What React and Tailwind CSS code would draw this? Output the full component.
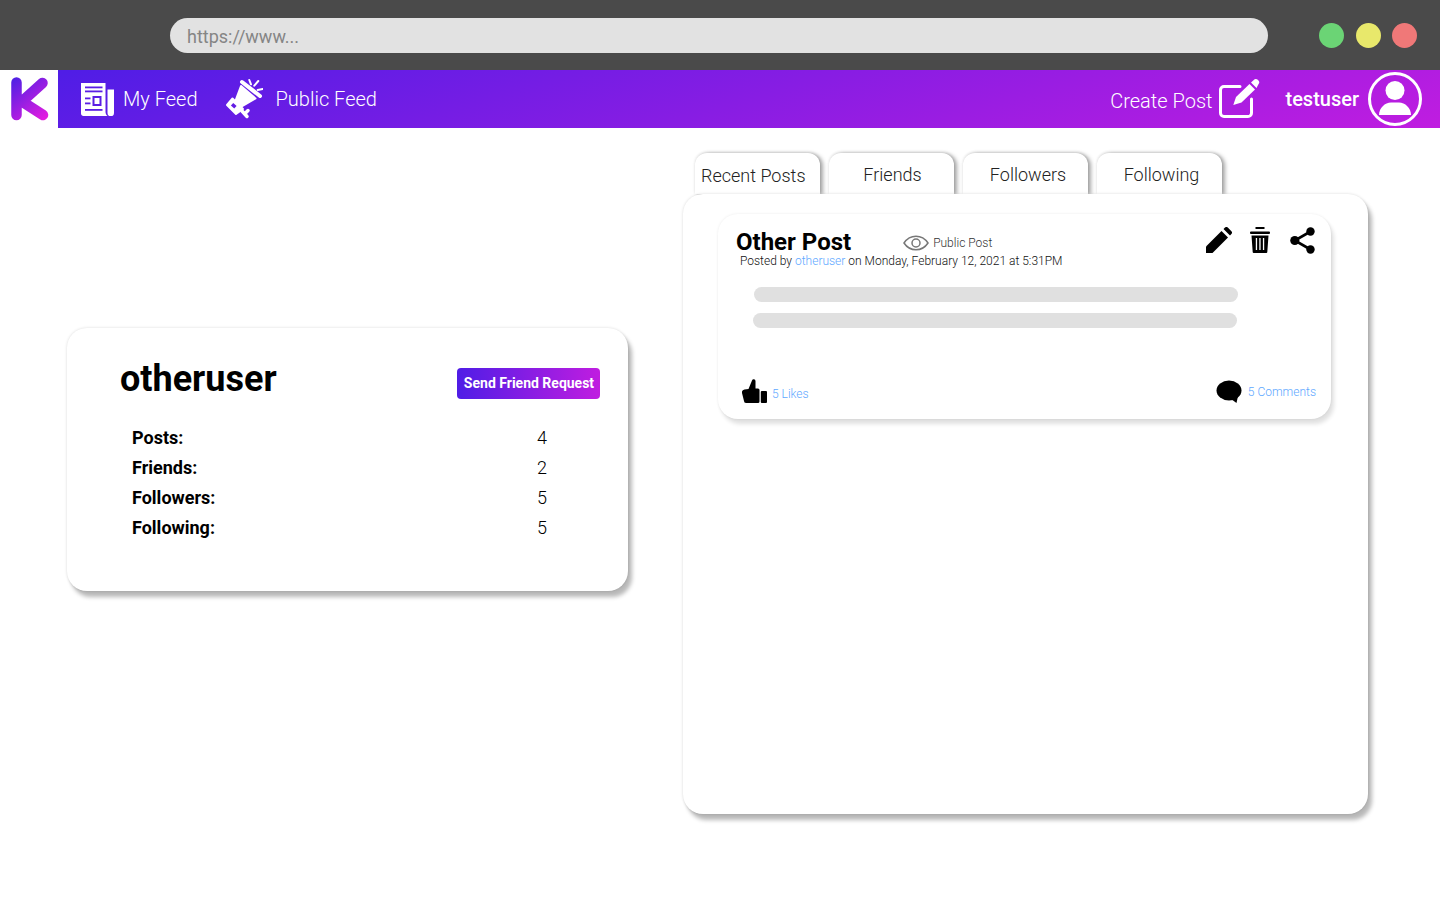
import React from 'react';

const KLogo = () => (
  <svg width="38" height="44" viewBox="0 0 38 44" fill="none" stroke="url(#klogo)" strokeWidth="10.500" strokeLinecap="round" strokeLinejoin="round">
    <defs>
      <linearGradient id="klogo" gradientUnits="userSpaceOnUse" x1="2" y1="2" x2="36" y2="42">
        <stop offset="0" stopColor="#4f20e4" />
        <stop offset="1" stopColor="#e81de0" />
      </linearGradient>
    </defs>
    <path d="M5.500 5.500V38M31.500 6L11 24.500L32 38" />
  </svg>
);

const NewspaperIcon = () => (
  <svg width="34" height="34" viewBox="0 0 34 34" fill="none">
    <path d="M0 1H24.500V30C24.500 31.500 25.300 33 26.500 34H2.500C1 34 0 33 0 31.500Z" fill="#fff" />
    <path d="M26.500 7.500H33V31A3.200 3.200 0 0 1 26.500 31Z" fill="#fff" />
    <g fill="#5a1de4">
      <rect x="4" y="4.500" width="17.500" height="1.800" />
      <rect x="4" y="8.500" width="17.500" height="1.800" />
      <rect x="4" y="15.500" width="5.500" height="1.800" />
      <rect x="4" y="20.500" width="5.500" height="1.800" />
      <rect x="4" y="27" width="17.500" height="1.800" />
      <path d="M11.500 14H20.500V24H11.500ZM13.500 16V22H18.500V16Z" fillRule="evenodd" />
    </g>
  </svg>
);

const MegaphoneIcon = () => (
  <svg width="38" height="42" viewBox="0 0 38 42" fill="none">
    <path d="M16 8L30.500 20.500L15 29.500L10 24Z" fill="#fff" stroke="#fff" strokeWidth="2" strokeLinejoin="round" />
    <path d="M7.500 20.500L18 31L11 36L2 27Z" fill="#fff" stroke="#fff" strokeWidth="2" strokeLinejoin="round" />
    <path d="M17 4L35 18" stroke="#fff" strokeWidth="4" strokeLinecap="round" />
    <rect x="6.500" y="26" width="4.500" height="3.500" transform="rotate(42 8.750 27.750)" fill="#621de4" />
    <path d="M17 33L22 38.500M20 35.500L23 32.500" stroke="#fff" strokeWidth="3.500" strokeLinecap="round" />
    <path d="M24.300 2L26 6.300M33.300 3L29.300 7.700M32.700 12L37.700 11" stroke="#fff" strokeWidth="2" strokeLinecap="round" />
  </svg>
);

const ComposeIcon = () => (
  <svg width="42" height="42" viewBox="0 0 42 42" fill="none">
    <path d="M21 8.500H5A3.500 3.500 0 0 0 1.500 12V35A3.500 3.500 0 0 0 5 38.500H29A3.500 3.500 0 0 0 32.500 35V21" stroke="#fff" strokeWidth="3" strokeLinecap="round" />
    <path d="M14.300 27L17 19L30.500 6L36 11.500L22.500 24.500Z" fill="#fff" />
    <path d="M32 4.500L34.500 2.200A3 3 0 0 1 39.300 6.500L37.500 10Z" fill="#fff" />
  </svg>
);

const UserIcon = () => (
  <svg width="54" height="54" viewBox="0 0 54 54" fill="none">
    <circle cx="27" cy="27" r="25.500" stroke="#fff" strokeWidth="3" />
    <circle cx="27" cy="18.500" r="9.500" fill="#fff" />
    <path d="M11 43C11 36 17 30.500 23 30.500H31C37 30.500 43 36 43 43Z" fill="#fff" />
  </svg>
);

const EyeIcon = () => (
  <svg width="26" height="16" viewBox="0 0 26 16" fill="none" stroke="#777" strokeWidth="1.500">
    <path d="M1 8C4 3.500 8 1.200 13 1.200S22 3.500 25 8C22 12.500 18 14.800 13 14.800S4 12.500 1 8Z" />
    <circle cx="13" cy="8" r="4" />
  </svg>
);

const PencilIcon = () => (
  <svg width="26" height="26" viewBox="0 0 26 26" fill="#000">
    <path d="M0 26V19.500L15.500 4L22 10.500L6.500 26Z" />
    <path d="M17.500 2L19 .6A2 2 0 0 1 21.800 .6L25.400 4.200A2 2 0 0 1 25.400 7L24 8.500Z" />
  </svg>
);

const TrashIcon = () => (
  <svg width="20" height="26" viewBox="0 0 20 26" fill="#000">
    <path d="M5.500 0H14.500V2H5.500Z" />
    <rect x="0" y="4.500" width="20" height="2.500" rx="1" />
    <path d="M1.500 8.500H18.500L17.300 25A1 1 0 0 1 16.300 26H3.700A1 1 0 0 1 2.700 25Z" />
    <g fill="#fff">
      <rect x="5.800" y="11" width="1.300" height="12" />
      <rect x="9.300" y="11" width="1.300" height="12" />
      <rect x="12.900" y="11" width="1.300" height="12" />
    </g>
  </svg>
);

const ShareIcon = () => (
  <svg width="26" height="27" viewBox="0 0 26 27" fill="#000">
    <circle cx="20.500" cy="4.500" r="4.200" />
    <circle cx="4.800" cy="13.500" r="4.600" />
    <circle cx="20.500" cy="22.500" r="4.200" />
    <path d="M20.500 4.500L4.800 13.500L20.500 22.500" fill="none" stroke="#000" strokeWidth="2.600" />
  </svg>
);

const ThumbIcon = () => (
  <svg width="25" height="24" viewBox="0 0 25 24" fill="#000">
    <path d="M6.500 10L10 1.500A1.800 1.800 0 0 1 13.500 2V9.500H16A1.500 1.500 0 0 1 17.500 11V22.500A1.500 1.500 0 0 1 16 24H4A2 2 0 0 1 2 22L0 14A3 3 0 0 1 2.500 10.500Z" />
    <rect x="18.800" y="12" width="6.200" height="12" rx="1" />
  </svg>
);

const BubbleIcon = () => (
  <svg width="26" height="24" viewBox="0 0 26 24" fill="#000">
    <ellipse cx="13" cy="10.500" rx="12.500" ry="10" />
    <path d="M15 19L22 16L20.500 23Z" />
  </svg>
);

const tabs = [
  { label: 'Recent Posts', cls: 'pl-[6px] pt-[9px]' },
  { label: 'Friends', cls: 'justify-center pl-[2px] pt-[8px]' },
  { label: 'Followers', cls: 'justify-center pl-[5px] pt-[8px]' },
  { label: 'Following', cls: 'justify-center pl-[4px] pt-[8px]' },
];

const stats = [
  ['Posts:', 4],
  ['Friends:', 2],
  ['Followers:', 5],
  ['Following:', 5],
];

export default function App() {
  return (
    <div className="h-[900px] w-[1440px] overflow-hidden bg-white font-['Roboto',sans-serif] text-black">
      <div className="flex h-[70px] items-center bg-[#4a4a4a] pl-[170px]">
        <div className="flex h-[35px] w-[1098px] items-center rounded-full bg-[#e2e2e2] pl-[17px] pt-[3px] text-[18px] text-[#858585]">
          https://www...
        </div>
        <div className="ml-[51px] flex gap-[11.500px]">
          <div className="h-[25px] w-[25px] rounded-full bg-[#6bd475]" />
          <div className="h-[25px] w-[25px] rounded-full bg-[#e8e86b]" />
          <div className="h-[25px] w-[25px] rounded-full bg-[#f07878]" />
        </div>
      </div>

      <nav className="flex h-[58px] items-center">
        <div className="flex h-full w-[58px] items-center justify-center bg-white pl-[1px]">
          <KLogo />
        </div>
        <div className="flex h-full flex-1 items-center bg-[linear-gradient(163deg,#4f1de6,#c01de0)] text-white">
          <div className="ml-[23px] flex items-center">
            <NewspaperIcon />
            <span className="ml-[8px] text-[20px] font-light">My Feed</span>
          </div>
          <div className="ml-[27px] flex items-center">
            <MegaphoneIcon />
            <span className="ml-[13px] text-[20px] font-light">Public Feed</span>
          </div>
          <div className="ml-auto flex items-center">
            <span className="mt-[4px] text-[20px] font-light">Create Post</span>
            <div className="ml-[7px]">
              <ComposeIcon />
            </div>
            <span className="ml-[24px] text-[20px] font-medium">testuser</span>
            <div className="ml-[9px] mr-[18px]">
              <UserIcon />
            </div>
          </div>
        </div>
      </nav>

      <main className="flex items-start pl-[67px]">
        <section className="mt-[200px] h-[263px] w-[561px] rounded-[20px] bg-white pl-[53px] pt-[29px] shadow-[4px_6px_4px_rgba(0,0,0,0.28),0_0_3px_rgba(0,0,0,0.15)]">
          <div className="flex items-start">
            <h1 className="text-[36px] font-bold leading-[44px]">otheruser</h1>
            <button className="ml-auto mr-[28px] mt-[11px] flex h-[31px] w-[143px] items-center justify-center rounded-[4px] bg-linear-to-r/srgb from-[#4f1de6] to-[#c01de0] pl-[1px] text-[14px] font-bold text-white">
              Send Friend Request
            </button>
          </div>
          <div className="ml-[12px] mt-[21px] w-[415px]">
            {stats.map(([name, value]) => (
              <div key={name} className="flex h-[30px] items-center justify-between text-[18px]">
                <span className="font-bold">{name}</span>
                <span className="font-light">{value}</span>
              </div>
            ))}
          </div>
        </section>

        <section className="ml-[55px] mt-[25px]">
          <div className="ml-[12px] flex gap-[9px]">
            {tabs.map((tab) => (
              <div
                key={tab.label}
                className={`flex h-[41px] w-[125px] rounded-t-[12px] bg-white text-[18px] font-light text-[#222] shadow-[3px_1px_4px_rgba(0,0,0,0.35),0_-1px_3px_rgba(0,0,0,0.12)] ${tab.cls}`}
              >
                {tab.label}
              </div>
            ))}
          </div>
          <div className="relative h-[620px] w-[685px] rounded-[20px] bg-white pl-[35px] pt-[20px] shadow-[4px_6px_4px_rgba(0,0,0,0.28),0_0_3px_rgba(0,0,0,0.15)]">
            <article className="flex h-[205px] w-[613px] flex-col rounded-[20px] bg-white pt-[16px] shadow-[3px_5px_4px_rgba(0,0,0,0.12),0_0_3px_rgba(0,0,0,0.08)]">
              <div className="flex h-[24px] items-start pl-[18px] pr-[15px]">
                <h2 className="text-[24px] font-bold leading-[24px]">Other Post</h2>
                <div className="ml-[52px] mt-[5px] flex items-center">
                  <EyeIcon />
                  <span className="ml-[4px] text-[12px] font-light leading-[16px] text-[#333]">Public Post</span>
                </div>
                <div className="ml-auto mt-[-3px] flex items-start gap-[18px]">
                  <PencilIcon />
                  <TrashIcon />
                  <div className="ml-[2px]">
                    <ShareIcon />
                  </div>
                </div>
              </div>
              <p className="ml-[22px] text-[12px] font-light leading-[14px] text-[#111]">
                Posted by <span className="text-[#60a8ff]">otheruser</span> on Monday, February 12, 2021 at 5:31PM
              </p>
              <div className="ml-[36px] mt-[19px] h-[15px] w-[484px] rounded-full bg-[#e0e0e0]" />
              <div className="ml-[35px] mt-[11px] h-[15px] w-[484px] rounded-full bg-[#e0e0e0]" />
              <div className="mt-[51px] flex items-end pl-[24px] pr-[15px]">
                <ThumbIcon />
                <span className="ml-[5px] text-[12px] font-light leading-[18px] text-[#60a8ff]">5 Likes</span>
                <div className="ml-auto mb-[-1px] flex items-center">
                  <BubbleIcon />
                  <span className="ml-[6px] text-[12px] font-light text-[#60a8ff]">5 Comments</span>
                </div>
              </div>
            </article>
          </div>
        </section>
      </main>
    </div>
  );
}
